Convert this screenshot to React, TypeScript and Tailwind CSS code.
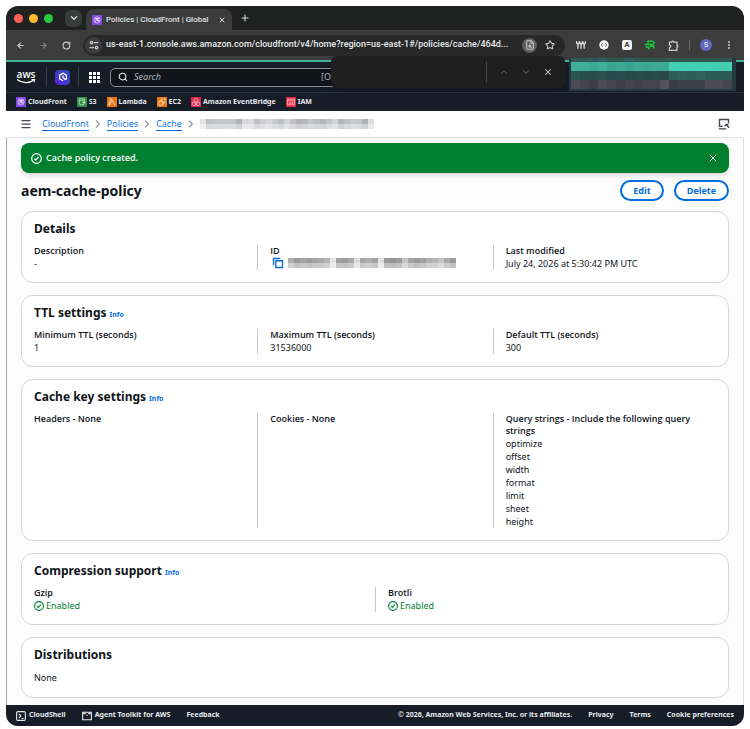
import type { ReactNode } from "react";
import {
  ArrowLeft,
  ArrowRight,
  ChevronDown,
  ChevronUp,
  FileSearch,
  Menu,
  MoreVertical,
  Plus,
  RotateCw,
  Search,
  Star,
  X,
} from "lucide-react";

const favorites = [
  { name: "CloudFront", color: "bg-[#8048e0]", kind: "globe" },
  { name: "S3", color: "bg-[#2f8f45]", kind: "bucket" },
  { name: "Lambda", color: "bg-[#ed7410]", kind: "lambda" },
  { name: "EC2", color: "bg-[#ed7410]", kind: "chip" },
  { name: "Amazon EventBridge", color: "bg-[#e0264e]", kind: "bridge" },
  { name: "IAM", color: "bg-[#e0263f]", kind: "iam" },
];

const queryStrings = ["optimize", "offset", "width", "format", "limit", "sheet", "height"];

// blurred-out account block, one row per strip
const accountRows = [
  ["#335852", "#335852", "#33585a", "#2f5f66", "#335852", "#335852", "#2f5f62", "#335852", "#335852", "#335852", "#335852", "#335852", "#335852", "#335852", "#335852", "#335852", "#335852", "#335852"],
  ["#3fae9a", "#3fae9a", "#3da895", "#3fae9a", "#3ba593", "#3da895", "#3aa290", "#3da895", "#3ba593", "#3da895", "#3da895", "#43cfb4", "#43cfb4", "#43cfb4", "#43cfb4", "#43cfb4", "#43cfb4", "#43cfb4"],
  ["#2a5550", "#284d4a", "#284d4a", "#2a504e", "#284a4a", "#2a4d4d", "#284a4a", "#284d4a", "#284a4a", "#284d4a", "#284a4a", "#2d5f58", "#2f625a", "#2d5f58", "#2f625a", "#2d5a55", "#2d5a55", "#2d5a55"],
  ["#4d4b55", "#45444f", "#3d3d47", "#4d4b55", "#45444f", "#3f3f4a", "#45444f", "#3f404a", "#45444f", "#45444f", "#555360", "#3a3c46", "#3f404a", "#3f3f4a", "#3f404a", "#4d4b55", "#4d4b55", "#45444f"],
];

const crumbCells = ["#e4e4e6", "#bfc0c4", "#c4c5c9", "#c4c5c9", "#c6c7cb", "#c4c5c9", "#b2b3b8", "#d6d7da", "#d9d9dc", "#c0c1c5", "#cbccd0", "#d6d7da", "#c8c9cd", "#bcbdc1", "#d2d3d6", "#c0c1c5", "#b2b3b8", "#b6b7bb", "#c4c5c9", "#bcbdc1", "#b6b7bb", "#c4c5c9", "#d2d3d6", "#b4b5b9", "#bfc0c4", "#c8c9cd", "#c4c5c9", "#b2b3b8", "#dedee1"];
const idCells = ["#b0b0b0", "#9c9c9c", "#a4a4a4", "#9c9c9c", "#a4a4a4", "#a8a8a8", "#b4b4b4", "#e4e4e4", "#a0a0a0", "#9c9c9c", "#a8a8a8", "#dcdcdc", "#a8a8a8", "#b0b0b0", "#a4a4a4", "#e0e0e0", "#999", "#949494", "#9c9c9c", "#c4c4c4", "#a4a4a4", "#999", "#a0a0a0", "#b0b0b0", "#b8b8b8", "#c4c4c4", "#aaa", "#999"];

function ServiceIcon({ kind }: { kind: string }) {
  return (
    <svg viewBox="0 0 16 16" className="size-full" fill="none" stroke="white" strokeWidth="0.9" aria-hidden="true">
      {kind === "globe" && (
        <>
          <circle cx="8" cy="8" r="5" />
          <path d="M4 5l4 1 4-1M5 12l1-4 4 1 2 2M8 6l2 3M6 8l2-2" />
          <circle cx="8" cy="6" r="1" />
          <circle cx="10" cy="9" r="1" />
        </>
      )}
      {kind === "bucket" && (
        <>
          <path d="M3 4l1.500 8.500h6L12 4M8 8l5 2-1-3" />
          <ellipse cx="7.500" cy="4" rx="4.500" ry="1.300" />
        </>
      )}
      {kind === "lambda" && <path d="M4 3h3l5 9h1.500M7.500 7L4 13H2.500L6 5" strokeWidth="1.200" />}
      {kind === "chip" && <path d="M3 7h6v6H3zM7 3h6v6H9M7 3v4M5 5v2M11 9v2M9 11h2" />}
      {kind === "bridge" && <path d="M8 2l3 2v3L8 8 5 7V4zM4 8l3 2v3l-3 1-2-2V9zM12 8l2 1v3l-2 2-3-1v-3zM8 8v6" />}
      {kind === "iam" && <path d="M2.500 3.500h11v9h-11zM2.500 6h11M5 8.500h2M5 10.500h3M10 8v3M9 9.500h3" />}
    </svg>
  );
}

function CheckCircle({ className }: { className: string }) {
  return (
    <svg viewBox="0 0 16 16" className={className} fill="none" stroke="currentColor" strokeWidth="1.800" aria-hidden="true">
      <circle cx="8" cy="8" r="7" />
      <path d="M4.800 8.200l2.200 2.200 4-4.600" />
    </svg>
  );
}

function Card({ title, info, children }: { title: string; info?: boolean; children: ReactNode }) {
  return (
    <section className="rounded-xl border border-[#d5d7db] bg-white px-3 pt-[9px] pb-3">
      <h2 className="mb-2 flex h-4 items-baseline gap-[3px] text-[12px] leading-4 font-bold">
        {title}
        {info && (
          <a href="#info" className="text-[7px] leading-none font-bold text-[#006ce0]">
            Info
          </a>
        )}
      </h2>
      {children}
    </section>
  );
}

function Field({ label, children }: { label: string; children?: ReactNode }) {
  return (
    <div className="-ml-3 border-l border-[#c6c6cd] pl-3 first:ml-0 first:border-l-0 first:pl-0">
      <dt className="font-['Open_Sans',sans-serif] leading-3 font-semibold">{label}</dt>
      <dd className="leading-[13px]">{children}</dd>
    </div>
  );
}

function Enabled() {
  return (
    <span className="flex items-center gap-0.5 text-[#00802f]">
      <CheckCircle className="size-2.5" />
      Enabled
    </span>
  );
}

function Redacted({ cells }: { cells: string[] }) {
  return (
    <span className="block">
      <span className="flex">
        {cells.map((color, i) => (
          <span key={i} className="h-[5px] w-1.5" style={{ backgroundColor: color }} />
        ))}
      </span>
      <span className="flex opacity-60">
        {cells.map((color, i) => (
          <span key={i} className="h-[5px] w-1.5" style={{ backgroundColor: color }} />
        ))}
      </span>
    </span>
  );
}

function BrowserChrome() {
  return (
    <div className="font-[Roboto,sans-serif] text-[#dfe1e3]">
      <div className="flex h-6 items-end bg-[#202221] pl-2">
        <div className="flex items-center gap-1.5 self-center">
          <span className="size-[9px] rounded-full bg-[#ff5f57]" />
          <span className="size-[9px] rounded-full bg-[#febc2e]" />
          <span className="size-[9px] rounded-full bg-[#28c840]" />
        </div>
        <button aria-label="Search tabs" className="ml-3 grid size-[17px] place-items-center self-center rounded-md bg-[#3a3b3b]">
          <ChevronDown className="size-2.5" strokeWidth={3} />
        </button>
        <div className="ml-1 flex h-[21px] w-[146px] items-center rounded-t-lg bg-[#3c3c3c] px-1.5 text-[8px]">
          <span className="mr-1 size-2.5 bg-[#8048e0]">
            <ServiceIcon kind="globe" />
          </span>
          <span className="font-medium whitespace-nowrap">Policies | CloudFront | Global</span>
          <button aria-label="Close tab" className="ml-auto">
            <X className="size-2" strokeWidth={3} />
          </button>
        </div>
        <button aria-label="New tab" className="ml-2 self-center">
          <Plus className="size-2.5" strokeWidth={2.5} />
        </button>
      </div>
      <div className="flex h-[30px] items-center bg-[#3c3c3c] pl-2.5 text-[#c7c9cb]">
        <button aria-label="Back"><ArrowLeft className="size-[9px]" strokeWidth={3} /></button>
        <button aria-label="Forward" className="ml-3.5 text-[#7f8183]"><ArrowRight className="size-[9px]" strokeWidth={3} /></button>
        <button aria-label="Reload" className="ml-3.5"><RotateCw className="size-[9px]" strokeWidth={3} /></button>
        <div className="ml-3 flex h-[21px] min-w-0 flex-1 items-center rounded-full bg-[#282828] px-0.5">
          <button aria-label="Site information" className="grid size-[17px] shrink-0 place-items-center rounded-full bg-[#3c3c3c]">
            <svg viewBox="0 0 16 16" className="size-2.5" fill="none" stroke="currentColor" strokeWidth="2">
              <circle cx="4" cy="4" r="2" />
              <path d="M8 4h7M1 12h7" />
              <circle cx="12" cy="12" r="2" />
            </svg>
          </button>
          <input
            aria-label="Address"
            readOnly
            value="us-east-1.console.aws.amazon.com/cloudfront/v4/home?region=us-east-1#/policies/cache/464d..."
            className="ml-1 min-w-0 flex-1 bg-transparent text-[9px] font-medium text-[#e6e8ea] outline-none"
          />
          <button aria-label="Find in page" className="grid size-[15px] shrink-0 place-items-center rounded-full bg-[#5c5e60]">
            <FileSearch className="size-2.5" strokeWidth={2.5} />
          </button>
          <button aria-label="Bookmark" className="mr-2 ml-2"><Star className="size-2.5" strokeWidth={2.5} /></button>
        </div>
        <div className="flex items-center gap-[13px] pr-2.5 pl-[11px]">
          <svg viewBox="0 0 16 16" className="size-2.5" fill="none" stroke="#e6e8ea" strokeWidth="2">
            <path d="M1 2v3l2 2 2-2V2M6 2v3l2 2 2-2V2M11 2v3l2 2 2-2V2M3 7v7M8 7v7M13 7v7" />
          </svg>
          <svg viewBox="0 0 16 16" className="size-2.5">
            <circle cx="8" cy="8" r="7.500" fill="#fff" />
            <path d="M6 5L3.500 8 6 11M10 5l2.500 3L10 11M7.500 8h1" fill="none" stroke="#333" strokeWidth="1.300" />
          </svg>
          <span className="grid size-2.5 place-items-center rounded-[2px] bg-[#f2f2f2] text-[8px] leading-none font-bold text-[#444]">A</span>
          <svg viewBox="0 0 16 16" className="size-2.5" fill="none" stroke="#1ec93f" strokeWidth="2.400">
            <path d="M5 2h7a2.500 2.500 0 0 1 0 5H5zM0 7h5M1 11h5v4M9 7v3h5v4" />
          </svg>
          <svg viewBox="0 0 16 16" className="size-[11px]" fill="none" stroke="currentColor" strokeWidth="1.800">
            <path d="M2 3h3.500a1.500 1.500 0 0 1 3 0H13v4.500a1.500 1.500 0 0 1 0 3V15H2v-4a2 2 0 0 0 0-4z" />
          </svg>
          <div className="-ml-[3px] flex items-center gap-2.5">
            <span className="h-2.5 w-px bg-[#6a6c6e]" />
            <span className="grid size-3 place-items-center rounded-full bg-[#5c6bc0] text-[7px] leading-none text-white">S</span>
            <MoreVertical className="ml-0.5 size-2.5" strokeWidth={3} />
          </div>
        </div>
      </div>
    </div>
  );
}

function FindBar() {
  return (
    <div className="absolute top-[50px] right-[179px] flex h-8 w-[234px] items-center justify-end rounded-md bg-[#1f1f1f] pr-3 text-[#5f6163] shadow-md">
      <span className="mr-3 h-5 w-px bg-[#4a4c4e]" />
      <button aria-label="Previous match" className="mr-3"><ChevronUp className="size-2.5" strokeWidth={2.5} /></button>
      <button aria-label="Next match" className="mr-3"><ChevronDown className="size-2.5" strokeWidth={2.5} /></button>
      <button aria-label="Close find bar" className="text-[#c7c9cb]"><X className="size-2.5" strokeWidth={2.5} /></button>
    </div>
  );
}

function AccountBlock() {
  return (
    <div className="absolute top-[52px] right-2 w-[167px] bg-[#243a40] pr-1 pb-0.5 pl-0.5">
      {accountRows.map((row, i) => (
        <div key={i} className="flex">
          {row.map((color, j) => (
            <span key={j} className={i === 0 ? "h-1 flex-1" : "h-[9px] flex-1"} style={{ backgroundColor: color }} />
          ))}
        </div>
      ))}
    </div>
  );
}

function ConsoleHeader() {
  return (
    <header className="bg-[#161d26] text-[#e6e8ee]">
      <div className="flex h-8 items-center border-t-2 border-[#42b4a0] pl-2.5">
        <a href="#home" className="flex w-5 flex-col items-center font-['Open_Sans',sans-serif] text-[10px] leading-[9px] font-semibold text-white">
          aws
          <svg viewBox="0 0 40 10" className="h-[5px] w-5" fill="none" stroke="white" aria-hidden="true">
            <path d="M2 1c10 8 25 8 34 1" strokeWidth="2.500" />
            <path d="M31 1h7l-2 6" strokeWidth="2" />
          </svg>
        </a>
        <span className="ml-2.5 h-5 w-px bg-[#343c48]" />
        <span className="ml-2 grid size-[15px] place-items-center rounded-sm bg-linear-to-tr from-[#5a14e0] to-[#1450b8]">
          <svg viewBox="0 0 16 16" className="size-3" fill="none" stroke="white" strokeWidth="1.800">
            <path d="M8 13l-4.500-2.500v-5L8 3l4.500 2.500v5l-2 1" />
            <path d="M8 6v2.500l3 3" />
          </svg>
        </span>
        <span className="ml-2 h-5 w-px bg-[#343c48]" />
        <button aria-label="Services" className="ml-2.5">
          <svg viewBox="0 0 11 11" className="size-[11px]" fill="white">
            <path d="M0 0h3v3H0zM4 0h3v3H4zM8 0h3v3H8zM0 4h3v3H0zM4 4h3v3H4zM8 4h3v3H8zM0 8h3v3H0zM4 8h3v3H4zM8 8h3v3H8z" />
          </svg>
        </button>
        <label className="ml-2.5 flex h-[19px] w-[310px] items-center rounded-[5px] border border-[#8c8c94] bg-[#0f141a] px-[7px]">
          <Search className="size-2.5 shrink-0" strokeWidth={2.5} />
          <input placeholder="Search" aria-label="Search" className="ml-1.5 w-[187px] bg-transparent text-[9px] italic outline-none placeholder:text-[#b4b4bb]" />
          <span className="text-[9px] text-[#b4b4bb]">[Option+S]</span>
        </label>
      </div>
      <nav className="flex h-[19px] items-center gap-2.5 border-t border-[#2a323d] pl-2.5 text-[7px] font-bold">
        {favorites.map((item) => (
          <a key={item.name} href="#service" className="flex items-center gap-0.5">
            <span className={`size-2.5 ${item.color}`}>
              <ServiceIcon kind={item.kind} />
            </span>
            {item.name}
          </a>
        ))}
      </nav>
    </header>
  );
}

function Breadcrumbs() {
  return (
    <div className="flex h-[27px] items-center border-b border-[#dedee3] bg-white px-3.5">
      <button aria-label="Open navigation"><Menu className="size-3 text-[#424650]" strokeWidth={2.5} /></button>
      <nav aria-label="Breadcrumbs" className="ml-2.5 flex items-center gap-1.5 font-['Open_Sans',sans-serif] font-medium text-[#006ce0]">
        {["CloudFront", "Policies", "Cache"].map((name) => (
          <span key={name} className="flex items-center gap-1.5">
            <a href="#crumb" className="border-b border-[#006ce0] leading-3">{name}</a>
            <svg viewBox="0 0 8 12" className="h-2 w-1.5" fill="none" stroke="#8c8c94" strokeWidth="1.800"><path d="M1 1l5 5-5 5" /></svg>
          </span>
        ))}
        <Redacted cells={crumbCells} />
      </nav>
      <button aria-label="Open tools" className="ml-auto text-[#424650]">
        <svg viewBox="0 0 16 16" className="size-3" fill="none" stroke="currentColor" strokeWidth="1.800">
          <path d="M6 11H2V2h12v5M1 14.500h10" />
          <path d="M15 13l-4-4M9 11l2-2.500h3" />
        </svg>
      </button>
    </div>
  );
}

export default function App() {
  return (
    <div className="bg-white p-1.5 pb-1 font-['Noto_Sans',sans-serif] text-[9px] text-[#0f141a]">
      <div className="relative overflow-hidden rounded-xl bg-[#fcfcfd]">
        <BrowserChrome />
        <ConsoleHeader />
        <AccountBlock />
        <FindBar />
        <Breadcrumbs />
        <main className="border-x border-r-[#dedee3] border-l-[#a4a4ab] px-3.5 pt-[5px] pb-[7px]">
          <div role="status" className="flex h-[30px] items-center rounded-lg bg-[#00802f] px-2.5 font-['Open_Sans',sans-serif] font-semibold text-white shadow-md">
            <CheckCircle className="mr-1 size-[11px]" />
            Cache policy created.
            <button aria-label="Dismiss" className="ml-auto"><X className="size-3" /></button>
          </div>
          <div className="flex items-center gap-2.5 pt-[7px] pb-2.5">
            <h1 className="mr-auto text-[14px] leading-5 font-bold">aem-cache-policy</h1>
            <button className="h-[21px] rounded-full border-2 border-[#006ce0] bg-white px-[11px] font-['Open_Sans',sans-serif] font-bold text-[#006ce0]">Edit</button>
            <button className="h-[21px] rounded-full border-2 border-[#006ce0] bg-white px-[11px] font-['Open_Sans',sans-serif] font-bold text-[#006ce0]">Delete</button>
          </div>
          <div className="flex flex-col gap-3">
            <Card title="Details">
              <dl className="grid grid-cols-3 gap-6">
                <Field label="Description">-</Field>
                <Field label="ID">
                  <span className="flex items-center gap-1">
                    <button aria-label="Copy ID" className="pl-0.5 text-[#006ce0]">
                      <svg viewBox="0 0 16 16" className="size-3" fill="none" stroke="currentColor" strokeWidth="1.800">
                        <path d="M5 5h9v9H5zM2 11V2h9" />
                      </svg>
                    </button>
                    <Redacted cells={idCells} />
                  </span>
                </Field>
                <Field label="Last modified">July 24, 2026 at 5:30:42 PM UTC</Field>
              </dl>
            </Card>
            <Card title="TTL settings" info>
              <dl className="grid grid-cols-3 gap-6">
                <Field label="Minimum TTL (seconds)">1</Field>
                <Field label="Maximum TTL (seconds)">31536000</Field>
                <Field label="Default TTL (seconds)">300</Field>
              </dl>
            </Card>
            <Card title="Cache key settings" info>
              <dl className="grid grid-cols-3 gap-6">
                <Field label="Headers - None" />
                <Field label="Cookies - None" />
                <Field label="Query strings - Include the following query strings">
                  <ul>
                    {queryStrings.map((q) => (
                      <li key={q}>{q}</li>
                    ))}
                  </ul>
                </Field>
              </dl>
            </Card>
            <Card title="Compression support" info>
              <dl className="grid grid-cols-2 gap-6">
                <Field label="Gzip"><Enabled /></Field>
                <Field label="Brotli"><Enabled /></Field>
              </dl>
            </Card>
            <Card title="Distributions">
              <p className="leading-[14px]">None</p>
            </Card>
          </div>
        </main>
        <footer className="flex h-[21px] items-center gap-4 bg-[#161d26] px-2.5 text-[7px] font-bold text-[#e6e8ee]">
          <button className="flex items-center gap-[3px]">
            <svg viewBox="0 0 16 16" className="size-2.5" fill="none" stroke="currentColor" strokeWidth="1.800">
              <rect x="1" y="1" width="14" height="14" rx="2" />
              <path d="M4.500 4.500L8 8l-3.500 3.500M9 12h3" />
            </svg>
            CloudShell
          </button>
          <button className="flex items-center gap-[3px]">
            <svg viewBox="0 0 16 16" className="size-2.5" fill="none" stroke="currentColor" strokeWidth="1.800">
              <path d="M1 2h14v12H1zM8 6v2" />
              <path d="M2 4h4M10 4h4" strokeWidth="2.500" />
            </svg>
            Agent Toolkit for AWS
          </button>
          <a href="#feedback">Feedback</a>
          <span className="ml-auto">© 2026, Amazon Web Services, Inc. or its affiliates.</span>
          <a href="#privacy">Privacy</a>
          <a href="#terms">Terms</a>
          <a href="#cookies">Cookie preferences</a>
        </footer>
      </div>
    </div>
  );
}
